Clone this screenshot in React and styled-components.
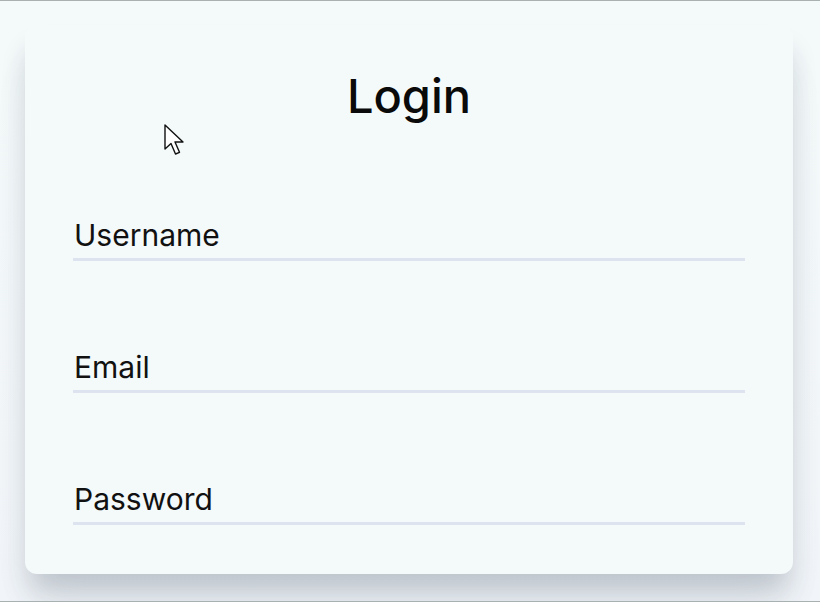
import React from 'react';
import styled, {createGlobalStyle} from 'styled-components';

const GlobalStyle = createGlobalStyle`
    html, body {
        margin: 0;
        padding: 0;
        background: #f2f6f9;
        font-family: Inter, "Noto Sans", "Liberation Sans", sans-serif;
    }
`;

const Page = styled.div`
    position: relative;
    box-sizing: border-box;
    height: 602px;
    border-top: 1px solid #a9b0b0;
    border-bottom: 1px solid #a9b0b0;
    padding: 24px 27px 0 25px;
    overflow: hidden;
    background: linear-gradient(#f4f9fa 0, #f4f9fa 60px, #f1f5f9 100%);
`;

const Card = styled.div`
    box-sizing: border-box;
    width: 768px;
    height: 549px;
    background: #f4f9fa;
    border-radius: 12px;
    box-shadow: 0 22px 28px -4px rgba(35, 50, 60, 0.2), 0 34px 44px -10px rgba(60, 80, 120, 0.08);
    padding: 43px 48px 0;
    display: flex;
    flex-direction: column;
`;

const Title = styled.h1`
    margin: 0 0 95px;
    font-size: 47px;
    line-height: 55px;
    font-weight: 500;
    text-align: center;
    color: #0a0a0a;
`;

const Fields = styled.div`
    display: flex;
    flex-direction: column;
    gap: 89px;
`;

const Field = styled.label`
    display: block;
    font-size: 30px;
    line-height: 35px;
    color: #111;
    padding: 0 0 5px 1px;
    border-bottom: 3px solid #dde4ef;
`;

const Cursor = styled.svg`
    position: absolute;
    left: 162px;
    top: 121px;
    width: 26px;
    height: 38px;
`;

const App = () => {
    return (
        <Page>
            <GlobalStyle />
            <Card>
                <Title>Login</Title>
                <Fields>
                    <Field>Username</Field>
                    <Field>Email</Field>
                    <Field>Password</Field>
                </Fields>
            </Card>
            <Cursor viewBox="0 0 26 38">
                <path
                    d="M3 3 L3 27 L9 21.5 L13.5 32 L17.5 30.3 L13 20 L21 20 Z"
                    fill="#fff"
                    stroke="#111"
                    strokeWidth="1.4"
                    strokeLinejoin="round"
                />
            </Cursor>
        </Page>
    );
};

export default App;
